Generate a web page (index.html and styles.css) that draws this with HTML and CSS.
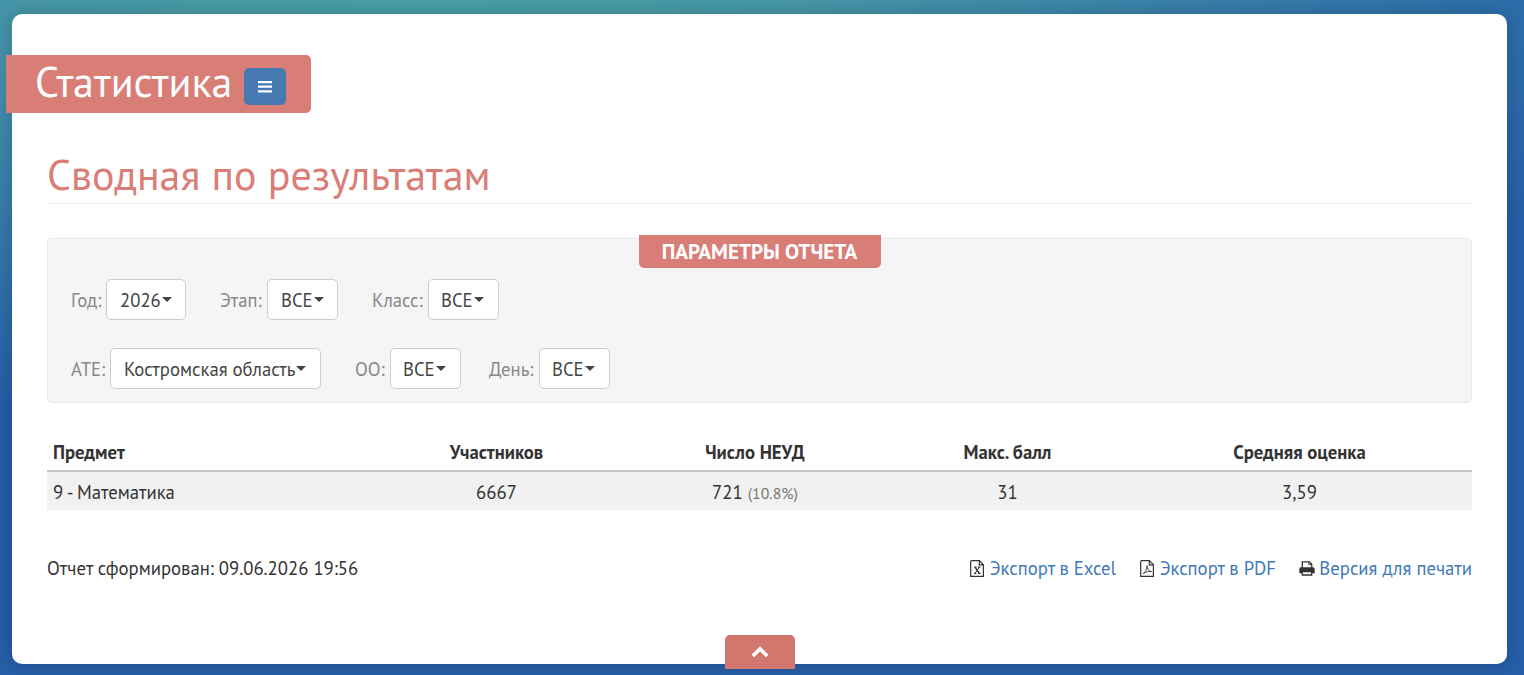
FILE: index.html
```html
<!DOCTYPE html>
<html lang="ru">
<head>
    <meta charset="UTF-8">
    <meta name="viewport" content="width=device-width, initial-scale=1.0">
    <title>Статистика</title>
    <link rel="stylesheet" href="styles.css">
</head>
<body>
    <div class="container">
        <div class="page-title">
            <h1>Статистика</h1>
            <button class="btn-menu" aria-label="Меню">
                <svg width="14" height="12" viewBox="0 0 14 12"><path d="M0 1h14M0 5.700h14M0 10.400h14" stroke="#fff" stroke-width="2.300"/></svg>
            </button>
        </div>

        <h2>Сводная по результатам</h2>

        <div class="well">
            <div class="well-title"><span>ПАРАМЕТРЫ ОТЧЕТА</span></div>
            <div class="params">
                <div class="param p-year"><label>Год:</label><button class="btn"><span>2026</span><i class="caret"></i></button></div>
                <div class="param p-stage"><label>Этап:</label><button class="btn"><span>ВСЕ</span><i class="caret"></i></button></div>
                <div class="param p-class"><label>Класс:</label><button class="btn"><span>ВСЕ</span><i class="caret"></i></button></div>
            </div>
            <div class="params">
                <div class="param p-ate"><label>АТЕ:</label><button class="btn"><span>Костромская область</span><i class="caret"></i></button></div>
                <div class="param p-oo"><label>ОО:</label><button class="btn"><span>ВСЕ</span><i class="caret"></i></button></div>
                <div class="param p-day"><label>День:</label><button class="btn"><span>ВСЕ</span><i class="caret"></i></button></div>
            </div>
        </div>

        <table class="table">
            <colgroup><col class="c1"><col class="c2"><col class="c3"><col class="c4"><col class="c5"></colgroup>
            <thead>
                <tr>
                    <th>Предмет</th>
                    <th>Участников</th>
                    <th>Число НЕУД</th>
                    <th>Макс. балл</th>
                    <th>Средняя оценка</th>
                </tr>
            </thead>
            <tbody>
                <tr>
                    <td>9 - Математика</td>
                    <td>6667</td>
                    <td>721 <small>(10.8%)</small></td>
                    <td>31</td>
                    <td>3,59</td>
                </tr>
            </tbody>
        </table>

        <div class="report-footer">
            <div class="created">Отчет сформирован: 09.06.2026 19:56</div>
            <div class="links">
                <a href="#" class="l-excel">
                    <svg width="15" height="17" viewBox="0 0 15 17" fill="none" stroke="#333" stroke-width="1.2"><path d="M1.6.7h7.8l4 4v11.6H.7V1.6q0-.9.9-.9zM9.3.9v4h4M4.2 7.200h2.300M8 7.200h2.300M4 13.400h2.300M8 13.400h2.500"/><path d="M5.200 7.300l4 6" stroke-width="1.5"/><path d="M9.300 7.300l-4.200 6" stroke-width="1"/></svg>
                    <span>Экспорт в Excel</span>
                </a>
                <a href="#" class="l-pdf">
                    <svg width="15" height="17" viewBox="0 0 15 17" fill="none" stroke="#333" stroke-width="1.2"><path d="M1.6.7h7.8l4 4v11.6H.7V1.6q0-.9.9-.9zM9.3.9v4h4"/><path d="M3 13.800c2-1 4.200-5 4-8.200 0 3 2 5.800 4.600 6-2.500-.6-5.300 0-8.600 2.200z" stroke-width=".9"/></svg>
                    <span>Экспорт в PDF</span>
                </a>
                <a href="#" class="l-print">
                    <svg width="16" height="15" viewBox="0 0 16 15"><path d="M3.300 7V.8h7l2.400 2.300V7" fill="#fff" stroke="#333" stroke-width="1.300"/><path d="M9.800 1v2.600h2.800" fill="none" stroke="#333"/><path d="M2 6.200h12q1.700 0 1.700 1.700v4.300H.3V7.900Q.3 6.200 2 6.200z" fill="#333"/><path d="M3.300 10.500h9.400V14H3.300z" fill="#fff" stroke="#333" stroke-width="1.300"/></svg>
                    <span>Версия для печати</span>
                </a>
            </div>
        </div>

        <a href="#" class="to-top" aria-label="Наверх">
            <svg width="18" height="12" viewBox="0 0 18 12"><path d="M1.800 10L9 2.900 16.200 10" fill="none" stroke="#fff" stroke-width="3.600"/></svg>
        </a>
    </div>
</body>
</html>
```
FILE: styles.css
```css
* {
    box-sizing: border-box;
}
body {
    margin: 0;
    padding: 14px 17px 0 12px;
    height: 675px;
    overflow: hidden;
    font-family: "PT Sans", "Noto Sans", sans-serif;
    font-size: 18.72px;
    line-height: 26px;
    color: #333;
    background: radial-gradient(ellipse 1350px 460px at 420px -40px, #4aa3a6 0%, #4697a8 30%, #357aab 65%, #265ea8 100%);
}
.container {
    position: relative;
    height: 650px;
    padding: 41px 35px 0;
    background: #fff;
    border-radius: 10px;
    box-shadow: 0 0 20px rgba(0, 0, 0, 0.2);
}
.page-title {
    display: flex;
    align-items: center;
    width: 305px;
    height: 58px;
    margin-left: -41px;
    padding-left: 29px;
    background: #d97e77;
    border-radius: 0 5px 5px 0;
}
h1, h2 {
    margin: 0;
    font-size: 42px;
    font-weight: 400;
    line-height: 50px;
    white-space: nowrap;
}
h1 {
    width: 209px;
    margin-top: -4px;
    color: #fff;
}
.btn-menu {
    display: flex;
    align-items: center;
    justify-content: center;
    width: 42px;
    height: 37px;
    margin-top: 5px;
    padding: 0;
    background: #4678b2;
    border: none;
    border-radius: 5px;
}
h2 {
    height: 54px;
    margin-top: 37px;
    color: #d97e77;
    border-bottom: 1px solid #eee;
}
.well {
    height: 165px;
    margin-top: 34px;
    padding: 0 23px;
    background: #f5f5f5;
    border: 1px solid #e7e7e7;
    border-radius: 5px;
}
.well-title {
    width: 242px;
    height: 33px;
    margin: -4px auto 0;
    background: #d97e77;
    border-radius: 0 0 5px 5px;
    color: #fff;
    font-size: 21.1px;
    font-weight: 700;
    line-height: 33px;
    text-align: center;
    white-space: nowrap;
}
.params {
    display: flex;
    height: 41px;
    margin-top: 11px;
}
.params + .params {
    margin-top: 28px;
}
.param {
    display: flex;
    align-items: center;
    justify-content: space-between;
    white-space: nowrap;
}
.param label {
    color: #888;
}
.btn {
    display: flex;
    align-items: center;
    justify-content: space-between;
    width: 71px;
    height: 41px;
    padding: 0 14px 0 12px;
    background: #fff;
    border: 1px solid #ccc;
    border-radius: 5px;
    color: #444;
    font: inherit;
}
.caret {
    border-top: 5px solid #444;
    border-left: 5px solid transparent;
    border-right: 5px solid transparent;
}
.p-year {
    width: 115px;
}
.p-year .btn {
    width: 80px;
    padding: 0 13px;
}
.p-stage {
    width: 118px;
    margin-left: 34px;
}
.p-stage .btn {
    padding: 0 13px;
}
.p-class {
    width: 127px;
    margin-left: 34px;
}
.p-ate {
    width: 250px;
}
.p-ate .btn {
    width: 211px;
    padding-left: 13px;
}
.p-oo {
    width: 106px;
    margin-left: 34px;
}
.p-day {
    width: 121px;
    margin-left: 28px;
}
.table {
    width: 100%;
    margin-top: 30px;
    border-collapse: collapse;
    table-layout: fixed;
}
.c1 {
    width: 327px;
}
.c2 {
    width: 245px;
}
.c3 {
    width: 272px;
}
.c4 {
    width: 233px;
}
.table th, .table td {
    height: 38px;
    padding: 0;
    text-align: center;
    white-space: nowrap;
}
.table th {
    border-bottom: 2px solid #c4c4c4;
}
.table td {
    height: 39px;
    padding-top: 1px;
    background: #f1f1f1;
}
.table th:first-child, .table td:first-child {
    padding-left: 6px;
    text-align: left;
}
.table th:last-child, .table td:last-child {
    padding-left: 3px;
}
.table small {
    color: #777;
    font-size: 15.8px;
    line-height: 1;
}
.report-footer {
    display: flex;
    justify-content: space-between;
    margin-top: 45px;
    white-space: nowrap;
}
.links {
    display: flex;
}
.links a {
    display: flex;
    align-items: center;
    justify-content: space-between;
    color: #4179b8;
    text-decoration: none;
}
.l-excel {
    width: 146px;
}
.l-pdf {
    width: 136px;
    margin-left: 24px;
}
.l-print {
    width: 173px;
    margin-left: 23px;
}
.to-top {
    position: absolute;
    left: 713px;
    bottom: -5px;
    display: flex;
    align-items: center;
    justify-content: center;
    width: 70px;
    height: 34px;
    background: #d2766e;
    border-radius: 5px 5px 0 0;
}
```
